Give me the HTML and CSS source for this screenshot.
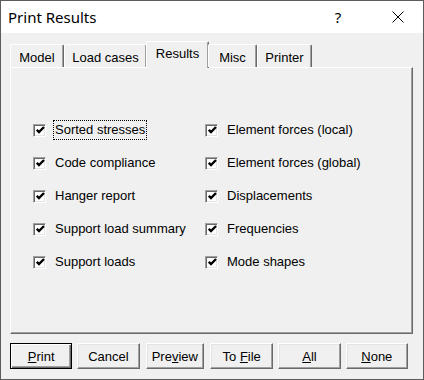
FILE: index.html
```html
<!DOCTYPE html>
<html lang="en">
<head>
    <meta charset="UTF-8">
    <title>Print Results</title>
    <link rel="stylesheet" href="styles.css">
</head>
<body>
    <div class="window">
        <div class="titlebar">
            <span class="title">Print Results</span>
            <span class="capbtn help">?</span>
            <span class="capbtn close">
                <svg width="12" height="12" viewBox="0 0 12 12"><path d="M0.5 0.5 L11.5 11.5 M11.5 0.5 L0.5 11.5" stroke="#000" stroke-width="1" fill="none"/></svg>
            </span>
        </div>
        <div class="body">
            <ul class="tabs">
                <li class="t-model">Model</li>
                <li class="t-load">Load cases</li>
                <li class="t-results active">Results</li>
                <li class="t-misc">Misc</li>
                <li class="t-printer">Printer</li>
            </ul>
            <div class="panel">
                <div class="grid">
                    <label class="chk"><span class="box"><svg width="9" height="9" viewBox="0 0 9 9"><path d="M0.8 3.8 L3 6 L8 1" stroke="#000" stroke-width="2.4" fill="none"/></svg></span><span class="txt focus">Sorted stresses</span></label>
                    <label class="chk"><span class="box"><svg width="9" height="9" viewBox="0 0 9 9"><path d="M0.8 3.8 L3 6 L8 1" stroke="#000" stroke-width="2.4" fill="none"/></svg></span><span class="txt">Element forces (local)</span></label>
                    <label class="chk"><span class="box"><svg width="9" height="9" viewBox="0 0 9 9"><path d="M0.8 3.8 L3 6 L8 1" stroke="#000" stroke-width="2.4" fill="none"/></svg></span><span class="txt">Code compliance</span></label>
                    <label class="chk"><span class="box"><svg width="9" height="9" viewBox="0 0 9 9"><path d="M0.8 3.8 L3 6 L8 1" stroke="#000" stroke-width="2.4" fill="none"/></svg></span><span class="txt">Element forces (global)</span></label>
                    <label class="chk"><span class="box"><svg width="9" height="9" viewBox="0 0 9 9"><path d="M0.8 3.8 L3 6 L8 1" stroke="#000" stroke-width="2.4" fill="none"/></svg></span><span class="txt">Hanger report</span></label>
                    <label class="chk"><span class="box"><svg width="9" height="9" viewBox="0 0 9 9"><path d="M0.8 3.8 L3 6 L8 1" stroke="#000" stroke-width="2.4" fill="none"/></svg></span><span class="txt">Displacements</span></label>
                    <label class="chk"><span class="box"><svg width="9" height="9" viewBox="0 0 9 9"><path d="M0.8 3.8 L3 6 L8 1" stroke="#000" stroke-width="2.4" fill="none"/></svg></span><span class="txt">Support load summary</span></label>
                    <label class="chk"><span class="box"><svg width="9" height="9" viewBox="0 0 9 9"><path d="M0.8 3.8 L3 6 L8 1" stroke="#000" stroke-width="2.4" fill="none"/></svg></span><span class="txt">Frequencies</span></label>
                    <label class="chk"><span class="box"><svg width="9" height="9" viewBox="0 0 9 9"><path d="M0.8 3.8 L3 6 L8 1" stroke="#000" stroke-width="2.4" fill="none"/></svg></span><span class="txt">Support loads</span></label>
                    <label class="chk"><span class="box"><svg width="9" height="9" viewBox="0 0 9 9"><path d="M0.8 3.8 L3 6 L8 1" stroke="#000" stroke-width="2.4" fill="none"/></svg></span><span class="txt">Mode shapes</span></label>
                </div>
            </div>
            <div class="buttons">
                <button class="btn default w64"><u>P</u>rint</button>
                <button class="btn w64 gap6">Cancel</button>
                <button class="btn w60 gap6">Pre<u>v</u>iew</button>
                <button class="btn w65">To <u>F</u>ile</button>
                <button class="btn w64"><u>A</u>ll</button>
                <button class="btn w64"><u>N</u>one</button>
            </div>
        </div>
    </div>
</body>
</html>
```

FILE: styles.css
```css
* {
    margin: 0;
    padding: 0;
    box-sizing: border-box;
}
body {
    width: 424px;
    height: 380px;
    background: #f0f0f0;
    font-family: "Liberation Sans", Arial, sans-serif;
    font-size: 13px;
    color: #000;
}
li {
    list-style: none;
}
.window {
    width: 424px;
    height: 380px;
    border: 1px solid #5c5c5c;
    background: #f0f0f0;
}
.titlebar {
    height: 32px;
    background: #fff;
    display: flex;
    align-items: center;
}
.titlebar .title {
    flex: 1;
    padding-left: 7px;
    font-family: "Noto Sans", "Open Sans", sans-serif;
    font-size: 15px;
}
.capbtn {
    width: 46px;
    height: 32px;
    display: flex;
    align-items: center;
    justify-content: center;
}
.capbtn.help {
    font-family: "Noto Sans", sans-serif;
    font-size: 15px;
    margin-right: 16px;
}
.capbtn.close svg {
    margin-left: -4px;
}
.body {
    padding: 8px 10px 0 9px;
}
.tabs {
    display: flex;
    height: 26px;
    align-items: flex-end;
    position: relative;
    z-index: 1;
}
.tabs li {
    height: 23px;
    padding-top: 5px;
    text-align: center;
    border-top: 1px solid #fff;
    border-left: 1px solid #fff;
    border-right: 1px solid #696969;
    box-shadow: inset -1px 0 0 #a0a0a0;
    border-radius: 2px 2px 0 0;
    background: #f0f0f0;
}
.tabs li.t-model { width: 54px; }
.tabs li.t-load { width: 83px; }
.tabs li.t-misc { width: 49px; }
.tabs li.t-printer { width: 55px; }
.tabs li.active {
    width: 63px;
    height: 27px;
    margin: 0 -1px -1px -1px;
    padding-top: 4px;
}
.panel {
    height: 267px;
    border-top: 1px solid #fff;
    border-left: 1px solid #fff;
    border-right: 1px solid #696969;
    border-bottom: 1px solid #696969;
    box-shadow: inset -1px -1px 0 #a0a0a0;
    padding: 52px 0 0 22px;
}
.grid {
    display: grid;
    grid-template-columns: 172px 180px;
    row-gap: 13px;
}
.chk {
    display: flex;
    align-items: center;
    height: 20px;
}
.box {
    width: 13px;
    height: 13px;
    display: flex;
    align-items: center;
    justify-content: center;
    background: #fff;
    border-top: 1px solid #a0a0a0;
    border-left: 1px solid #a0a0a0;
    border-right: 1px solid #fff;
    border-bottom: 1px solid #fff;
    box-shadow: inset 1px 1px 0 #696969, inset -1px -1px 0 #e3e3e3;
}
.box svg {
    display: block;
    margin: 1px 0 0 1px;
}
.txt {
    margin-left: 7px;
    padding: 1px 1px 2px 1px;
    border: 1px dotted transparent;
    line-height: 15px;
}
.txt.focus {
    border-color: #000;
}
.buttons {
    display: flex;
    margin-top: 9px;
}
.btn {
    height: 26px;
    margin-right: 5px;
    font-family: "Liberation Sans", Arial, sans-serif;
    font-size: 13px;
    color: #000;
    background: #f0f0f0;
    border-top: 1px solid #fff;
    border-left: 1px solid #fff;
    border-right: 1px solid #696969;
    border-bottom: 1px solid #696969;
    box-shadow: inset -1px -1px 0 #a0a0a0, inset 1px 1px 0 #e3e3e3;
}
.btn.default {
    border: 1px solid #000;
    box-shadow: inset 1px 1px 0 #fff, inset -1px -1px 0 #696969, inset -2px -2px 0 #a0a0a0;
}
.w64 { width: 64px; }
.w60 { width: 60px; }
.w65 { width: 65px; }
.btn.gap6 { margin-right: 6px; }
```
